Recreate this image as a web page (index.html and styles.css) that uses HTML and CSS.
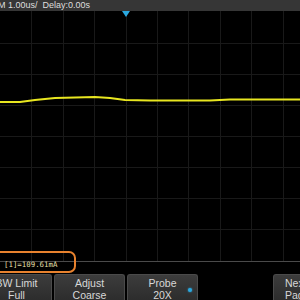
FILE: index.html
```html
<!DOCTYPE html>
<html lang="en">
<head>
  <meta charset="UTF-8" />
  <title>Scope</title>
  <link rel="stylesheet" href="styles.css">
</head>
<body>
  <div class="scope">
    <div class="topbar">
      <span class="timebase">M 1.00us/</span>
      <span class="delay">Delay:0.00s</span>
    </div>
    <div class="screen">
      <svg class="grid" width="300" height="263" viewBox="0 0 300 263">
        <g stroke="#191919" stroke-width="1">
          <line x1="31.5" y1="0" x2="31.5" y2="250" />
          <line x1="63.5" y1="0" x2="63.5" y2="250" />
          <line x1="94.5" y1="0" x2="94.5" y2="250" />
          <line x1="126.5" y1="0" x2="126.5" y2="250" />
          <line x1="157.5" y1="0" x2="157.5" y2="250" />
          <line x1="188.5" y1="0" x2="188.5" y2="250" />
          <line x1="220.5" y1="0" x2="220.5" y2="250" />
          <line x1="251.5" y1="0" x2="251.5" y2="250" />
          <line x1="283.5" y1="0" x2="283.5" y2="250" />
          <line x1="0" y1="32.5" x2="300" y2="32.5" />
          <line x1="0" y1="63.5" x2="300" y2="63.5" />
          <line x1="0" y1="94.5" x2="300" y2="94.5" />
          <line x1="0" y1="125.5" x2="300" y2="125.5" />
          <line x1="0" y1="156.5" x2="300" y2="156.5" />
          <line x1="0" y1="187.5" x2="300" y2="187.5" />
          <line x1="0" y1="218.5" x2="300" y2="218.5" />
        </g>
        <line x1="0" y1="250.5" x2="300" y2="250.5" stroke="#4a4a4a" />
        <polyline fill="none" stroke="#e8e620" stroke-width="2.2"
          points="0,91 20,91 35,89 55,87 95,86 110,87 125,89 150,89.5 210,89.5 230,88.5 300,88.5" />
      </svg>
      <div class="trigger"></div>
      <div class="measure">[1]=109.61mA</div>
    </div>
    <div class="softkeys">
      <div class="key">BW Limit<br>Full</div>
      <div class="key">Adjust<br>Coarse</div>
      <div class="key">Probe<br>20X<span class="knob"></span></div>
      <div class="key empty"></div>
      <div class="key next">Next<br>Page</div>
    </div>
  </div>
</body>
</html>
```

FILE: styles.css
```css
body {
  margin: 0;
  background: #000;
  font-family: "Liberation Sans", Arial, sans-serif;
}

.scope {
  width: 300px;
  height: 300px;
  overflow: hidden;
  display: flex;
  flex-direction: column;
  background: #000;
}

.topbar {
  height: 11px;
  background: #363636;
  color: #dedede;
  font-size: 9px;
  line-height: 11px;
  white-space: nowrap;
  display: flex;
  gap: 5px;
  margin-left: -2px;
}

.screen {
  position: relative;
  height: 263px;
}

.grid {
  display: block;
}

.trigger {
  position: absolute;
  left: 122px;
  top: 0;
  width: 0;
  height: 0;
  border-left: 4px solid transparent;
  border-right: 4px solid transparent;
  border-top: 6px solid #2aa8df;
}

.measure {
  position: absolute;
  left: -12px;
  top: 240px;
  width: 70px;
  height: 18px;
  padding-left: 14px;
  border: 2px solid #e8822e;
  border-radius: 7px;
  color: #e2dfa6;
  font-family: "DejaVu Sans Mono", monospace;
  font-size: 7.4px;
  line-height: 24px;
}

.softkeys {
  display: flex;
  gap: 2px;
  margin-left: -19px;
  flex: 1;
}

.key {
  position: relative;
  flex: 0 0 71px;
  background: linear-gradient(#3c3c3c, #2c2c2c);
  border: 1px solid #4a4a4a;
  border-bottom: none;
  border-radius: 3px 3px 0 0;
  box-sizing: border-box;
  color: #d8d8d8;
  font-size: 10.5px;
  line-height: 12px;
  text-align: center;
  padding-top: 2px;
}

.key.empty {
  visibility: hidden;
}

.key.next {
  text-align: left;
  padding-left: 11px;
}

.knob {
  position: absolute;
  right: 5px;
  top: 13px;
  width: 4px;
  height: 4px;
  border-radius: 50%;
  background: #2aa8df;
  box-shadow: 0 0 2px #2aa8df;
}
```
